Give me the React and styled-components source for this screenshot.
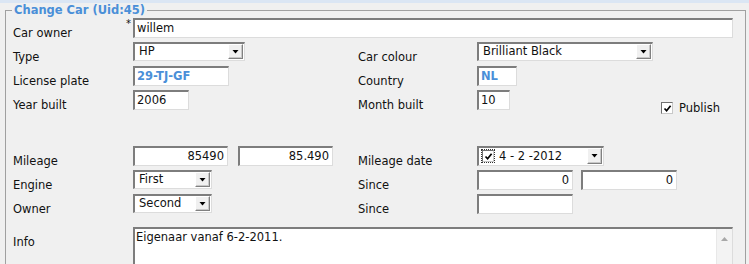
import React from 'react';
import styled, { createGlobalStyle } from 'styled-components';

const Global = createGlobalStyle`
  html, body { margin: 0; padding: 0; background: #f0f0f0; }
  body {
    font-family: "DejaVu Sans", Verdana, sans-serif;
    font-size: 11.5px;
    color: #111;
    overflow: hidden;
  }
`;

const TopBand = styled.div`
  height: 3px;
  background: #dbe6f4;
`;

const Fieldset = styled.fieldset`
  margin: 0 3px 0 5px;
  padding: 1px 12px 0 6px;
  border: 1px solid #a0a0a0;
  min-width: 0;
`;

const Legend = styled.legend`
  padding: 0 2px;
  font-weight: bold;
  color: #4a8fd8;
  line-height: 14px;
`;

const Form = styled.div`
  display: grid;
  grid-template-columns: 121px 224px 120px 1fr;
  grid-template-rows: repeat(4, 20px) 28px repeat(3, 20px) 5px 60px;
  row-gap: 4px;
`;

const Label = styled.div`
  padding: 8px 0 0 1px;
  line-height: 14px;
  white-space: nowrap;
  grid-column: ${p => p.$col || 'auto'};
  grid-row: ${p => p.$row || 'auto'};
`;

const Cell = styled.div`
  display: flex;
  align-items: flex-start;
  gap: ${p => p.$gap || 0}px;
  grid-column: ${p => p.$span || 'auto'};
  grid-row: ${p => p.$row || 'auto'};
  position: relative;
  min-width: 0;
`;

const Box = styled.div`
  box-sizing: border-box;
  height: ${p => p.$h || 20}px;
  width: ${p => (p.$w ? `${p.$w}px` : '100%')};
  background: #fff;
  border-style: solid;
  border-width: 2px 1px 1px 2px;
  border-color: #7d7d7d #dcdcdc #dcdcdc #7d7d7d;
  flex: none;
`;

const TextBox = styled(Box)`
  padding: 0 3px 0 2px;
  line-height: 17px;
  white-space: nowrap;
  overflow: hidden;
  text-align: ${p => (p.$right ? 'right' : 'left')};
  font-weight: ${p => (p.$accent ? 'bold' : 'normal')};
  color: ${p => (p.$accent ? '#4a8fd8' : '#111')};
`;

const Required = styled.span`
  position: absolute;
  left: -7px;
  top: 1px;
  font-size: 10px;
  line-height: 10px;
`;

const SelectBox = styled(Box)`
  display: flex;
  align-items: stretch;
  padding: 0 1px 1px 0;
`;

const SelectText = styled.div`
  flex: 1;
  padding-left: ${p => p.$pad ?? 4}px;
  line-height: 15px;
  white-space: nowrap;
  overflow: hidden;
  display: flex;
  align-items: center;
  gap: 5px;
`;

const DropButton = styled.div`
  box-sizing: border-box;
  width: 15px;
  margin: 0 0 0 1px;
  background: #f0f0f0;
  border-style: solid;
  border-width: 1px;
  border-color: #fff #808080 #808080 #fff;
  box-shadow: inset -1px -1px 0 #c8c8c8;
  display: flex;
  align-items: center;
  justify-content: center;
  flex: none;
`;

const Arrow = () => (
  <svg width="7" height="4" viewBox="0 0 7 4">
    <path d="M0.5 0 H6.5 L3.5 3.5 Z" fill="#000" />
  </svg>
);

const CheckBoxBox = styled.div`
  box-sizing: border-box;
  width: 12px;
  height: 12px;
  background: #fff;
  border-style: solid;
  border-width: 1px;
  border-color: #707070 #c8c8c8 #c8c8c8 #707070;
  display: flex;
  align-items: center;
  justify-content: center;
  flex: none;
  outline: ${p => (p.$focus ? '1px dotted #333' : 'none')};
  outline-offset: 0px;
`;

const Check = () => (
  <svg width="9" height="9" viewBox="0 0 9 9">
    <path d="M1.5 4.5 L3.6 6.8 L7.6 1.8" fill="none" stroke="#000" strokeWidth="1.7" />
  </svg>
);

const Publish = styled.label`
  display: flex;
  align-items: center;
  gap: 6px;
  margin: 12px 0 0 151px;
  line-height: 12px;
  white-space: nowrap;
`;

const TextArea = styled(Box)`
  height: 60px;
  display: flex;
`;

const AreaText = styled.div`
  flex: 1;
  padding: 1px 3px 0 1px;
  line-height: 14px;
`;

const ScrollTrack = styled.div`
  width: 16px;
  background: #f3f3f3;
  border-left: 1px solid #e8e8e8;
  display: flex;
  justify-content: center;
  padding-top: 8px;
  box-sizing: border-box;
`;

const Select = ({ w, children }) => (
  <SelectBox $w={w} $h={19}>
    <SelectText>{children}</SelectText>
    <DropButton><Arrow /></DropButton>
  </SelectBox>
);

export default function App() {
  return (
    <>
      <Global />
      <TopBand />
      <Fieldset>
        <Legend>Change Car (Uid:45)</Legend>
        <Form>
          <Label $row="1" $col="1">Car owner</Label>
          <Cell $row="1" $span="2 / 5">
            <Required>*</Required>
            <TextBox>willem</TextBox>
          </Cell>

          <Label $row="2" $col="1">Type</Label>
          <Cell $row="2"><Select w={112}>HP</Select></Cell>
          <Label $row="2">Car colour</Label>
          <Cell $row="2"><Select w={176}>Brilliant Black</Select></Cell>

          <Label $row="3" $col="1">License plate</Label>
          <Cell $row="3"><TextBox $w={96} $accent>29-TJ-GF</TextBox></Cell>
          <Label $row="3">Country</Label>
          <Cell $row="3"><TextBox $w={40} $accent>NL</TextBox></Cell>

          <Label $row="4" $col="1">Year built</Label>
          <Cell $row="4"><TextBox $w={56}>2006</TextBox></Cell>
          <Label $row="4">Month built</Label>
          <Cell $row="4">
            <TextBox $w={33}>10</TextBox>
            <Publish>
              <CheckBoxBox><Check /></CheckBoxBox>
              Publish
            </Publish>
          </Cell>

          <Label $row="6" $col="1">Mileage</Label>
          <Cell $row="6" $gap={10}>
            <TextBox $w={95} $right>85490</TextBox>
            <TextBox $w={95} $right>85.490</TextBox>
          </Cell>
          <Label $row="6">Mileage date</Label>
          <Cell $row="6">
            <SelectBox $w={127}>
              <SelectText $pad={3}>
                <CheckBoxBox $focus><Check /></CheckBoxBox>
                4 - 2 -2012
              </SelectText>
              <DropButton><Arrow /></DropButton>
            </SelectBox>
          </Cell>

          <Label $row="7" $col="1">Engine</Label>
          <Cell $row="7"><Select w={79}>First</Select></Cell>
          <Label $row="7">Since</Label>
          <Cell $row="7" $gap={8}>
            <TextBox $w={96} $right>0</TextBox>
            <TextBox $w={96} $right>0</TextBox>
          </Cell>

          <Label $row="8" $col="1">Owner</Label>
          <Cell $row="8"><Select w={79}>Second</Select></Cell>
          <Label $row="8">Since</Label>
          <Cell $row="8"><TextBox $w={96} /></Cell>

          <Label $row="10" $col="1">Info</Label>
          <Cell $row="10" $span="2 / 5">
            <TextArea>
              <AreaText>Eigenaar vanaf 6-2-2011.</AreaText>
              <ScrollTrack>
                <svg width="7" height="4" viewBox="0 0 7 4">
                  <path d="M0 4 H7 L3.5 0 Z" fill="#a8a8a8" />
                </svg>
              </ScrollTrack>
            </TextArea>
          </Cell>
        </Form>
      </Fieldset>
    </>
  );
}
